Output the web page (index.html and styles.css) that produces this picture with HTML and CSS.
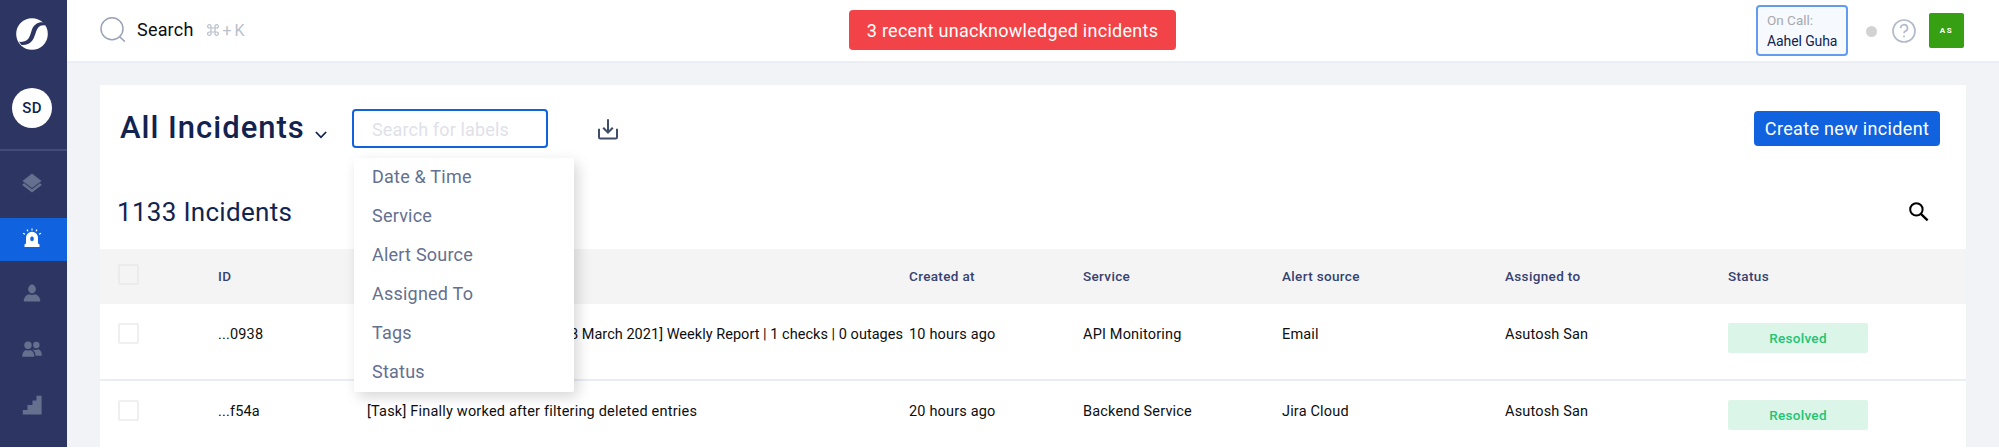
FILE: index.html
```html
<!DOCTYPE html>
<html lang="en">
<head>
<meta charset="utf-8">
<title>All Incidents</title>
<link rel="stylesheet" href="styles.css">
</head>
<body>
<div class="app">
  <nav class="sidebar">
    <div class="brand">
      <svg class="logo" viewBox="0 0 32 32"><circle cx="16" cy="16" r="15.800" fill="#fff"/><path d="M31 5.200C24 2.800 18.200 5.500 16 11.500C13.600 18 13.500 24.800 3 23.800L5.500 27C15 27.500 17.200 22 19.500 15.500C21.500 9.500 23.500 6.800 28.500 7.400Z" fill="#2d3663"/></svg>
      <div class="team">SD</div>
    </div>
    <a class="nav-item first"><svg width="20" height="20" viewBox="0 0 20 20"><path d="M10 .5L19.500 8L10 15L.5 8Z"/><path d="M.5 11.300L2.200 10.200L10 16.200L17.800 10.200L19.500 11.300V12.200L10 19.500L.5 12.200Z"/></svg></a>
    <a class="nav-item active"><svg width="20" height="20" viewBox="0 0 20 20"><path d="M4 15.500V9.800a6 6 0 0 1 12 0V15.500L17.500 16.500V19H2.500V16.500Z"/><rect x="8.300" y="8.500" width="3.400" height="4.500" rx="1.500" fill="#1062df"/><path d="M10 .4V2.600M5 1.600L6 3.300M15 1.600L14 3.300M1 5.200L3 6.300M19 5.200L17 6.300" stroke="#fff" stroke-width="1.200"/></svg></a>
    <a class="nav-item"><svg width="20" height="20" viewBox="0 0 20 20"><ellipse cx="10" cy="6" rx="3.900" ry="4.400"/><path d="M1.800 18.500V16.800Q3 12 7 11.200Q10 12.800 13 11.200Q17 12 18.200 16.800V18.500Z"/></svg></a>
    <a class="nav-item"><svg width="20" height="20" viewBox="0 0 20 20"><circle cx="6" cy="6.200" r="3.700"/><circle cx="14.300" cy="6" r="3.200"/><path d="M.3 17.800V16Q1 12 4 11Q6 12 8.200 11Q11.500 12 12.200 16V17.800Z"/><path d="M10.300 10.500Q14 11.500 16.500 10.300Q19.200 11.300 19.700 15V16.700H13.600Q13.300 12.500 10.300 10.500Z"/></svg></a>
    <a class="nav-item"><svg width="20" height="20" viewBox="0 0 20 20"><path d="M.8 19.500V15H5.500V10H10.500V5.500H14.500V.8H19.600V19.500Z"/></svg></a>
  </nav>
  <div class="main">
    <header class="topbar">
      <div class="search">
        <svg width="26" height="26" viewBox="0 0 26 26" fill="none" stroke="#9aa3b8" stroke-width="1.500"><circle cx="12" cy="11.800" r="11"/><path d="M19.200 19.200L24.800 24.600"/></svg>
        <span class="search-label">Search</span>
        <span class="shortcut"><svg width="12" height="12" viewBox="0 0 12 12" fill="none" stroke="#b9bfcb" stroke-width="1.200"><path d="M4 4H8V8H4ZM4 4H2.400A1.700 1.700 0 1 1 4 2.400ZM8 4V2.400A1.700 1.700 0 1 1 9.600 4ZM8 8H9.600A1.700 1.700 0 1 1 8 9.600ZM4 8V9.600A1.700 1.700 0 1 1 2.400 8Z"/></svg><span>+</span><span>K</span></span>
      </div>
      <div class="alert">3 recent unacknowledged incidents</div>
      <div class="user-area">
        <div class="oncall"><span class="oncall-label">On Call:</span><span class="oncall-name">Aahel Guha</span></div>
        <span class="presence"></span>
        <svg class="help" width="24" height="24" viewBox="0 0 24 24" fill="none" stroke="#b3bacb" stroke-width="1.700"><circle cx="12" cy="12" r="11"/><path d="M8.700 9.300A3.400 3.400 0 1 1 13.300 12.300Q12 12.900 12 14.300"/><path d="M12 16.400V18.200"/></svg>
        <div class="avatar">AS</div>
      </div>
    </header>
    <section class="panel">
      <div class="toolbar">
        <h1 class="title">All Incidents</h1>
        <svg class="chevron" width="12" height="8" viewBox="0 0 12 8" fill="none" stroke="#12234f" stroke-width="1.800"><path d="M.9 1L6 6.300L11.100 1"/></svg>
        <div class="filter">
          <div class="field">Search for labels</div>
          <ul class="menu">
            <li>Date &amp; Time</li>
            <li>Service</li>
            <li>Alert Source</li>
            <li>Assigned To</li>
            <li>Tags</li>
            <li>Status</li>
          </ul>
        </div>
        <svg class="download" width="20" height="21" viewBox="0 0 20 21" fill="none" stroke="#3f4d68" stroke-width="2"><path d="M1 9.800V18.200Q1 19.500 2.300 19.500H17.700Q19 19.500 19 18.200V9.800"/><path d="M10 .3V13.500M5.200 8.700L10 13.500L14.800 8.700"/></svg>
        <button class="create">Create new incident</button>
      </div>
      <div class="count-row">
        <h2 class="count">1133 Incidents</h2>
        <svg width="20" height="20" viewBox="0 0 20 20" fill="none" stroke="#000" stroke-width="2"><circle cx="7.400" cy="7.400" r="6.200"/><path d="M11.900 11.900L18.600 18.300" stroke-width="2.400"/></svg>
      </div>
      <div class="table">
        <div class="row head">
          <span class="check"></span><span>ID</span><span></span><span>Created at</span><span>Service</span><span>Alert source</span><span>Assigned to</span><span>Status</span>
        </div>
        <div class="row">
          <span class="check"></span><span>...0938</span><span class="end">[28 March 2021] Weekly Report | 1 checks | 0 outages</span><span>10 hours ago</span><span>API Monitoring</span><span>Email</span><span>Asutosh San</span><span class="badge">Resolved</span>
        </div>
        <div class="row">
          <span class="check"></span><span>...f54a</span><span class="summary">[Task] Finally worked after filtering deleted entries</span><span>20 hours ago</span><span>Backend Service</span><span>Jira Cloud</span><span>Asutosh San</span><span class="badge">Resolved</span>
        </div>
      </div>
    </section>
  </div>
</div>
</body>
</html>
```

FILE: styles.css
```css
* { box-sizing: border-box; }
body { margin: 0; background: #fff; font-family: Roboto, "Liberation Sans", sans-serif; color: #0d0e10; overflow: hidden; }
svg { display: block; flex: none; }

.app { display: flex; height: 447px; overflow: hidden; background: #f2f3f6; }
.sidebar { width: 67px; flex: none; background: #2d3663; }
.brand { height: 151px; padding: 18px 0 0 16px; border-bottom: 2px solid #434c77; }
.logo { width: 32px; height: 32px; }
.team { width: 40px; height: 40px; margin: 38px 0 0 -4px; border-radius: 50%; background: #fff; color: #12234f; font-size: 15px; font-weight: 500; line-height: 40px; text-align: center; letter-spacing: .2px; }
.nav-item { display: flex; align-items: center; height: 56px; padding-left: 22px; fill: #65708f; }
.nav-item.first { height: 67px; padding-bottom: 3px; }
.nav-item.active { height: 43px; margin-bottom: 4px; padding-bottom: 3px; background: #1062df; fill: #fff; }

.main { flex: 1; min-width: 0; display: flex; flex-direction: column; }
.topbar { height: 63px; flex: none; display: grid; grid-template-columns: 782px 327px 1fr; align-items: start; background: #fff; border-bottom: 2px solid #ebeff4; }
.search { display: flex; padding: 17px 0 0 33px; }
.search-label { margin-left: 11px; font-size: 18px; line-height: 26px; letter-spacing: .2px; }
.shortcut { display: flex; align-items: center; gap: 4px; height: 26px; margin-left: 13px; color: #b9bfcb; font-size: 16px; }
.shortcut span + span { margin-left: -1px; }
.alert { height: 40px; margin-top: 10px; border-radius: 4px; background: #f24448; color: #fff; font-size: 18px; line-height: 41px; text-align: center; letter-spacing: .27px; }
.user-area { display: flex; align-items: center; height: 50px; margin: 5px 35px 0 0; justify-content: flex-end; }
.oncall { width: 92px; height: 51px; padding: 3px 0 0 9px; border: 2px solid #649af0; border-radius: 4px; background: #f6fafe; }
.oncall span { display: block; height: 21.500px; line-height: 21px; white-space: nowrap; }
.oncall-label { color: #a6a8ac; font-size: 13.500px; }
.oncall-name { color: #12234f; font-size: 14px; letter-spacing: -.1px; }
.presence { width: 11px; height: 11px; margin: 2px 15px 0 18px; border-radius: 50%; background: #d2d2d2; }
.help { margin-top: 1px; }
.avatar { width: 35px; height: 35px; margin: 1px 0 0 13px; border-radius: 2px; background: #36a012; color: #fff; font-size: 8px; font-weight: 700; line-height: 35px; text-align: center; letter-spacing: 1.500px; }

.panel { flex: 1; width: 1866px; margin: 22px 0 0 33px; background: #fff; }
.toolbar { display: flex; height: 90px; padding: 24px 26px 0 20px; }
.title { width: 184px; margin: 2px 0 0; color: #12234f; font-size: 31px; font-weight: 500; line-height: 34px; letter-spacing: 1px; white-space: nowrap; }
.chevron { margin: 22px 0 0 11px; }
.filter { position: relative; width: 196px; margin-left: 25px; }
.field { height: 39px; padding-left: 18px; border: 2px solid #1062df; border-radius: 4px; color: #dfe1e9; font-size: 18px; line-height: 37px; letter-spacing: .15px; }
.menu { position: absolute; z-index: 2; top: 49px; left: 2px; width: 220px; height: 234px; margin: 0; padding: 0 0 0 18px; border-radius: 2px; background: #fff; box-shadow: 4px 5px 14px rgba(0, 0, 0, .16); list-style: none; color: #64708f; font-size: 18px; line-height: 39px; letter-spacing: .22px; }
.menu li { height: 39px; line-height: 38px; }
.download { margin: 10px 0 0 50px; }
.create { height: 35px; width: 186px; margin: 2px 0 0 auto; padding: 0; border: 0; border-radius: 4px; background: #1062df; color: #fff; font: 18px/35px Roboto, sans-serif; letter-spacing: .33px; }
.count-row { display: flex; justify-content: space-between; align-items: center; height: 74px; padding: 0 37px 0 17px; }
.count { margin: 0; color: #12234f; font-size: 26px; font-weight: 400; line-height: 34px; letter-spacing: .3px; }
.row { display: grid; grid-template-columns: 100px 149px 542px 174px 199px 223px 223px 1fr; align-items: start; height: 77px; padding: 19px 0 0 18px; border-bottom: 2px solid #e9edf4; font-size: 14.500px; line-height: 23px; letter-spacing: .17px; white-space: nowrap; }
.row.head { height: 55px; padding-top: 15px; border: 0; background: #f4f4f5; color: #36426f; font-size: 13.500px; font-weight: 500; line-height: 25px; letter-spacing: .35px; }
.check { width: 21px; height: 21px; border: 2px solid #edeff1; border-radius: 2px; }
.head .check { border-color: #e9ebec; }
.end { padding-right: 6px; text-align: right; letter-spacing: .03px; }
.summary { letter-spacing: .2px; }
.badge { width: 140px; height: 30px; border-radius: 2px; background: #dbf5e8; color: #22c474; font-size: 13.500px; font-weight: 500; line-height: 31px; text-align: center; letter-spacing: .3px; }
```
